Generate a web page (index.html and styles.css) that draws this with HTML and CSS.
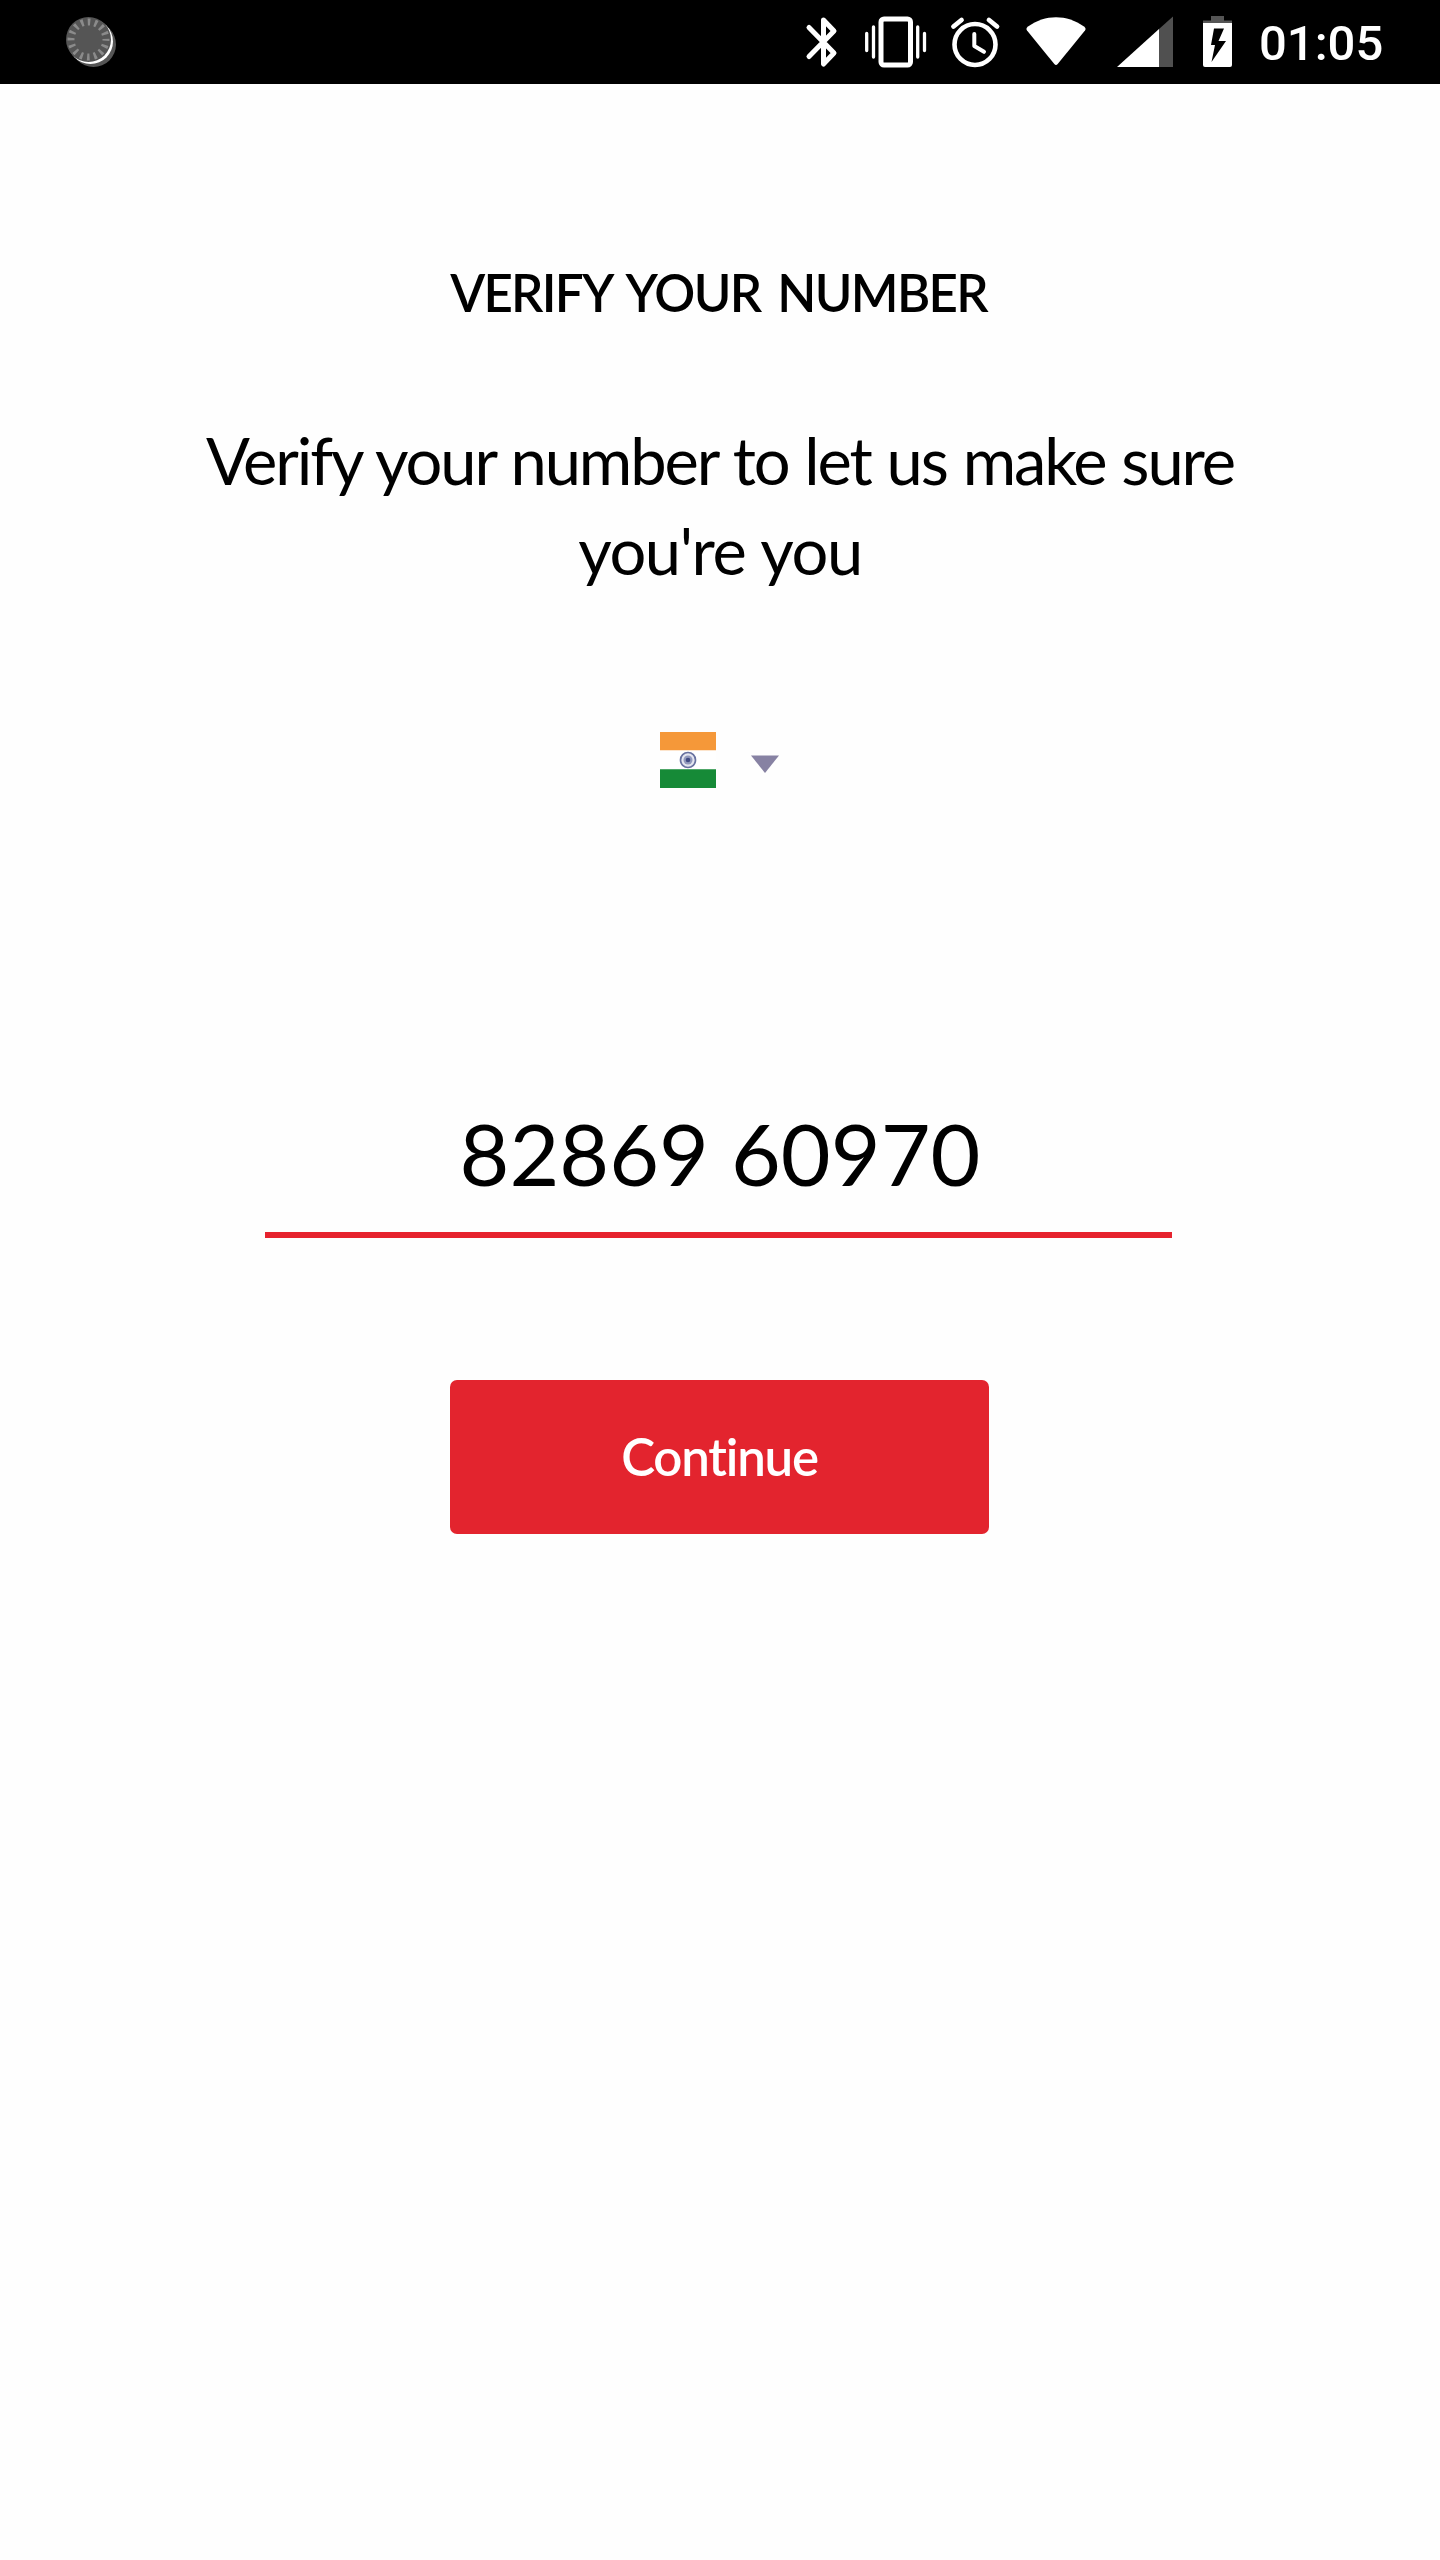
FILE: index.html
```html
<!DOCTYPE html>
<html lang="en">
<head>
<meta charset="utf-8">
<title>Verify your number</title>
<link rel="stylesheet" href="styles.css">
</head>
<body>
<header class="status">
  <svg class="spinner" width="50" height="51" viewBox="66 16 50 51">
    <circle cx="93.500" cy="44.500" r="22.500" fill="#555"/>
    <circle cx="90.500" cy="41.500" r="22.500" fill="#fff"/>
    <circle cx="88.500" cy="39.500" r="22.500" fill="#555"/>
    <circle cx="88.500" cy="39.500" r="17.500" fill="none" stroke="#8b8b8b" stroke-width="7" stroke-dasharray="2.600 4.272" stroke-dashoffset="1.300"/>
  </svg>
  <svg class="icons" width="460" height="84" viewBox="790 0 460 84">
    <g fill="none" stroke="#fff" stroke-width="4.600" stroke-linecap="round" stroke-linejoin="round">
      <path stroke-width="5" d="M809 27.500 834 53 823.500 64V20L834 31 809 56.500"/>
      <rect x="881" y="19" width="29.500" height="46" rx="3" stroke-width="5"/>
      <path stroke-width="3.300" d="M873.500 27v30M917.700 27v30M866.700 33.500v17M924.500 33.500v17"/>
      <circle cx="975" cy="44.500" r="20.500"/>
      <path d="M974.300 34v12l9.700 5.800" stroke-width="4"/>
      <path d="M953.500 26.500l8-6.500M989 20l8 6.500" stroke-width="4.800"/>
    </g>
    <path fill="#fff" d="M1027 30.500Q1025.500 28.500 1028 26.500C1045 14 1067 14 1084 26.500Q1086.500 28.500 1085 30.500L1057.700 64Q1056 66 1054.300 64Z"/>
    <path fill="#505050" d="M1159 29V67h14V16.500Z"/>
    <path fill="#fff" d="M1117 67 1159 29V67Z"/>
    <path fill="#555" d="M1203 23v-2.500h8V16h13v4.500h8V23Z"/>
    <path fill="#fff" d="M1203 23h29v42q0 2-2 2h-25q-2 0-2-2Z"/>
    <path fill="#000" d="M1214 28.500h10l-5.500 12.500h7.500L1211.500 62l3.500-17h-4Z"/>
  </svg>
  <span class="clock">01:05</span>
</header>
<main class="verify">
  <h1 class="title">VERIFY YOUR NUMBER</h1>
  <p class="intro">Verify your number to let us make sure<br><span class="intro-end">you're you</span></p>
  <div class="country">
    <svg width="56" height="56" viewBox="0 0 56 56">
      <path fill="#f59839" d="M0 0h56v18.500H0z"/>
      <path fill="#fff" d="M0 18.500h56v19H0z"/>
      <path fill="#168a37" d="M0 37.300h56V56H0z"/>
      <circle cx="28" cy="28" r="7.500" fill="#e4e5ef" stroke="#68719f" stroke-width="1.700"/>
      <circle cx="28" cy="28" r="4.500" fill="#9299bc"/>
      <circle cx="28" cy="28" r="2.300" fill="#414b83"/>
    </svg>
    <svg width="28" height="18" viewBox="0 0 28 18"><path fill="#8782a3" d="M0 .5h28L14 18z"/></svg>
  </div>
  <div class="phone">82869 60970</div>
  <button class="continue" type="button">Continue</button>
</main>
</body>
</html>
```

FILE: styles.css
```css
* { box-sizing: border-box; }
body {
  margin: 0;
  min-height: 2560px;
  background: #fefefe;
  color: #000;
  font-family: Lato, "Liberation Sans", sans-serif;
}
.status {
  display: flex;
  align-items: center;
  height: 84px;
  padding: 0 57px 0 66px;
  background: #000;
  color: #fff;
}
.spinner { margin-bottom: 1px; }
.icons { margin-left: auto; }
.clock {
  width: 133px;
  padding-left: 9px;
  padding-top: 4px;
  font: 500 49px/58px Roboto, sans-serif;
  white-space: nowrap;
}
.verify {
  display: flex;
  flex-direction: column;
  align-items: center;
}
.title {
  margin: 179px 3px 0 0;
  font-size: 51px;
  font-weight: 600;
  line-height: 60px;
  letter-spacing: -1.7px;
  word-spacing: 6px;
  white-space: nowrap;
}
.intro {
  margin: 92px 0 1px;
  font-size: 65px;
  font-weight: 400;
  line-height: 90px;
  letter-spacing: -2.1px;
  word-spacing: 1.3px;
  text-align: center;
  white-space: nowrap;
}
.intro-end { letter-spacing: -1.4px; }
.country {
  display: flex;
  align-items: center;
  gap: 35px;
  height: 56px;
  margin: 136px 1px 0 0;
}
.country svg + svg { margin-top: 8px; }
.phone {
  width: 907px;
  height: 156px;
  margin: 294px 3px 0 0;
  padding-left: 3px;
  border-bottom: 6px solid #e6232e;
  font-size: 86px;
  line-height: 141px;
  text-align: center;
}
.continue {
  width: 539px;
  height: 154px;
  margin: 142px 1px 0 0;
  padding: 0;
  border: 0;
  border-radius: 7px;
  background: #e3242e;
  color: #fff;
  font: 600 51px/154px Lato, sans-serif;
  font-variant-ligatures: none;
  letter-spacing: -1.2px;
}
```
